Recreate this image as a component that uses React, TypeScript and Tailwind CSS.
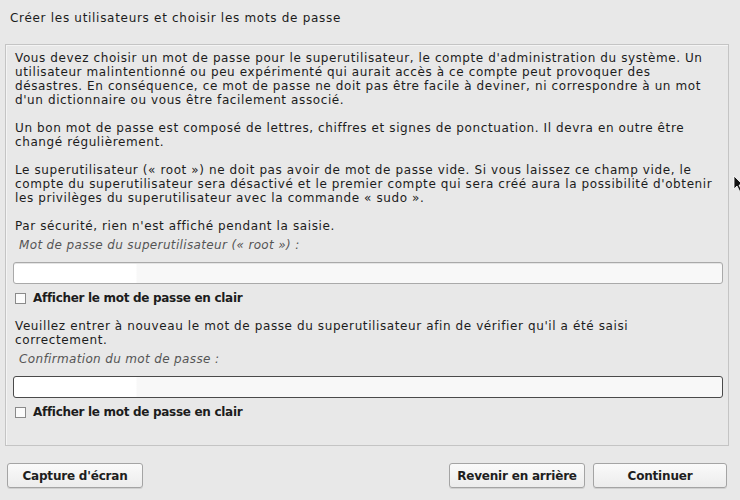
import React from "react";

const font = { fontFamily: '"DejaVu Sans", Verdana, sans-serif' };

function PasswordField({ focused }: { focused?: boolean }) {
  return (
    <div
      className={`h-[22px] rounded-[3px] border ${
        focused ? "border-[#4a4a4a]" : "border-[#a9a9a9] shadow-[inset_0_1px_0_#e4e4e4]"
      } bg-[linear-gradient(to_right,#ffffff_0,#ffffff_122px,#f8f8f8_123px,#f8f8f8_100%)]`}
    />
  );
}

function ShowCheckbox() {
  return (
    <label className="flex items-center gap-[7px] text-[12px] leading-[14px] text-[#1c1c1c]">
      <span className="h-[11px] w-[11px] border border-[#8a8a8a] bg-[#fbfbfb]" />
      <span className="font-semibold tracking-[-0.3px]">Afficher le mot de passe en clair</span>
    </label>
  );
}

function Btn({ children, w }: { children: React.ReactNode; w: string }) {
  return (
    <button
      className={`${w} h-[25px] rounded-[3px] border border-[#a4a4a4] bg-[linear-gradient(#fafafa,#ececec)] text-[12px] font-semibold tracking-[-0.2px] text-[#1e1e1e] shadow-[0_1px_0_#d0d0d0]`}
    >
      {children}
    </button>
  );
}

export default function App() {
  return (
    <div className="relative flex h-[500px] w-[740px] flex-col bg-[#e8e8e8] text-[#1c1c1c]" style={font}>
      <div className="px-[10px] pt-[11px] text-[12px] leading-[14px] tracking-[0.7px]">
        Créer les utilisateurs et choisir les mots de passe
      </div>

      <div className="mx-[5px] mt-[19px] h-[402px] w-[724px] border border-[#c4c4c4] shadow-[inset_1px_1px_0_#f4f4f4] px-[9px] pt-[6px] text-[12px] leading-[14px]">
        <div className="whitespace-nowrap tracking-[0.6px]">
          <p>
            Vous devez choisir un mot de passe pour le superutilisateur, le compte d'administration du système. Un
            <br />
            utilisateur malintentionné ou peu expérimenté qui aurait accès à ce compte peut provoquer des
            <br />
            désastres. En conséquence, ce mot de passe ne doit pas être facile à deviner, ni correspondre à un mot
            <br />
            d'un dictionnaire ou vous être facilement associé.
          </p>
          <p className="mt-[14px]">
            Un bon mot de passe est composé de lettres, chiffres et signes de ponctuation. Il devra en outre être
            <br />
            changé régulièrement.
          </p>
          <p className="mt-[14px]">
            Le superutilisateur (« root ») ne doit pas avoir de mot de passe vide. Si vous laissez ce champ vide, le
            <br />
            compte du superutilisateur sera désactivé et le premier compte qui sera créé aura la possibilité d'obtenir
            <br />
            les privilèges du superutilisateur avec la commande « sudo ».
          </p>
          <p className="mt-[14px]">Par sécurité, rien n'est affiché pendant la saisie.</p>
        </div>
        <div className="mt-[5px] pl-[4px] text-[12px] italic tracking-[0.35px] text-[#555555]">
          Mot de passe du superutilisateur (« root ») :
        </div>
        <div className="mt-[10px] -mx-[2px] w-[710px]">
          <PasswordField />
        </div>
        <div className="mt-[7px]">
          <ShowCheckbox />
        </div>
        <p className="mt-[14px] whitespace-nowrap tracking-[0.6px]">
          Veuillez entrer à nouveau le mot de passe du superutilisateur afin de vérifier qu'il a été saisi
          <br />
          correctement.
        </p>
        <div className="mt-[5px] pl-[4px] text-[12px] italic tracking-[0.35px] text-[#555555]">
          Confirmation du mot de passe :
        </div>
        <div className="mt-[10px] -mx-[2px] w-[710px]">
          <PasswordField focused />
        </div>
        <div className="mt-[7px]">
          <ShowCheckbox />
        </div>
      </div>

      <div className="mt-[17px] flex px-[7px]">
        <Btn w="w-[136px]">Capture d'écran</Btn>
        <div className="ml-auto flex gap-[8px] pr-[6px]">
          <Btn w="w-[136px]">Revenir en arrière</Btn>
          <Btn w="w-[134px]">Continuer</Btn>
        </div>
      </div>

      <svg className="absolute left-[733px] top-[175px]" width="12" height="18" viewBox="0 0 12 18">
        <path d="M1 1 L1 14 L4 11 L7 17 L9 16 L6 10 L10 10 Z" fill="#111" stroke="#fff" strokeWidth="0.8" />
      </svg>
    </div>
  );
}
